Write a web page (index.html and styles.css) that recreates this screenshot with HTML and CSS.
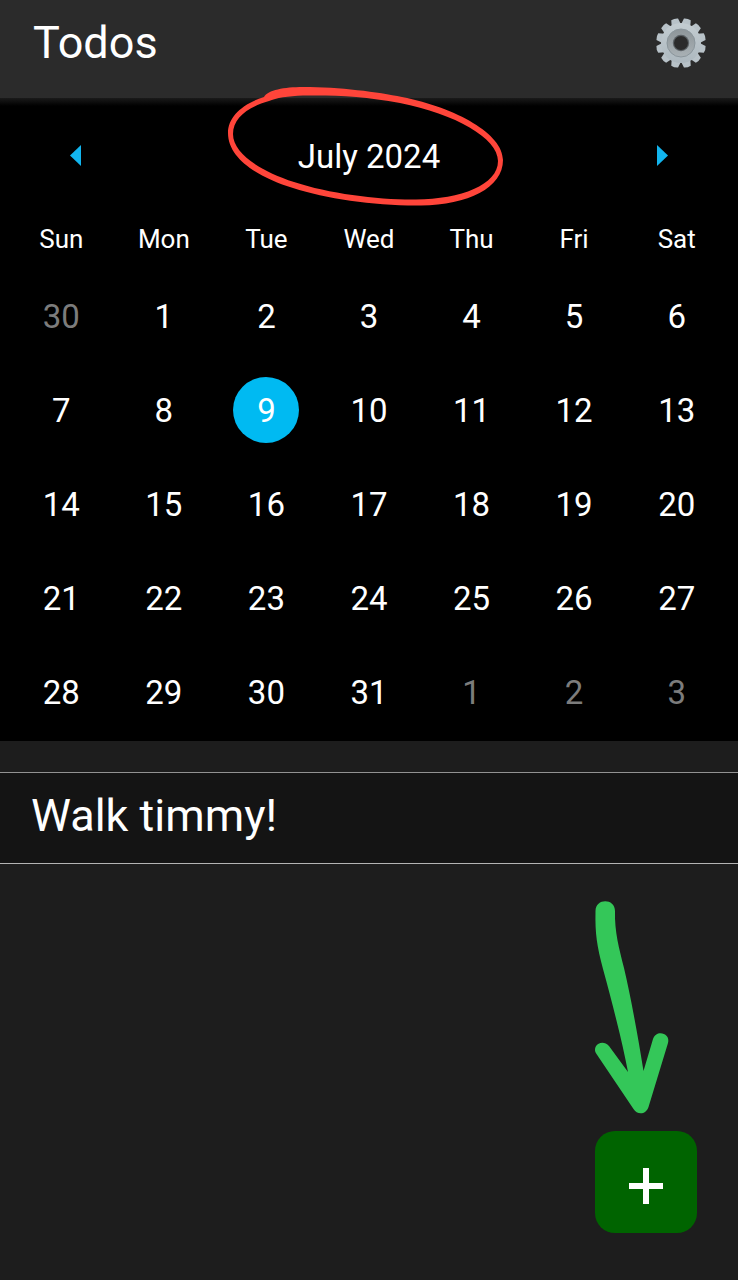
FILE: index.html
```html
<!DOCTYPE html>
<html lang="en">
<head>
<meta charset="utf-8">
<meta name="viewport" content="width=device-width, initial-scale=1">
<title>Todos</title>
<link rel="stylesheet" href="styles.css">
</head>
<body>
<header class="app-bar">
  <h1 class="app-title">Todos</h1>
  <button class="settings" type="button" aria-label="Settings">
    <svg class="gear" viewBox="-26 -26 52 52" aria-hidden="true">
      <defs>
        <linearGradient id="metal" x1="0" y1="0" x2="0" y2="1">
          <stop offset="0" stop-color="#c3ccd1"/>
          <stop offset="1" stop-color="#adb8bf"/>
        </linearGradient>
        <linearGradient id="ring" x1="0" y1="0" x2="0" y2="1">
          <stop offset="0" stop-color="#8d9599"/>
          <stop offset="1" stop-color="#a9b1b5"/>
        </linearGradient>
        <path id="tooth" d="M-4.800-18 L-3.500-24.500 Q0-25.700 3.500-24.500 L4.800-18Z"/>
      </defs>
      <g fill="#b8c2c8">
        <use href="#tooth" transform="rotate(15)"/><use href="#tooth" transform="rotate(45)"/>
        <use href="#tooth" transform="rotate(75)"/><use href="#tooth" transform="rotate(105)"/>
        <use href="#tooth" transform="rotate(135)"/><use href="#tooth" transform="rotate(165)"/>
        <use href="#tooth" transform="rotate(195)"/><use href="#tooth" transform="rotate(225)"/>
        <use href="#tooth" transform="rotate(255)"/><use href="#tooth" transform="rotate(285)"/>
        <use href="#tooth" transform="rotate(315)"/><use href="#tooth" transform="rotate(345)"/>
      </g>
      <circle r="20" fill="url(#metal)"/>
      <circle r="14" fill="url(#ring)" stroke="#8b969c" stroke-width="1"/>
      <circle r="8.2" fill="#5a6064"/>
      <circle r="7" fill="#2b2b2b"/>
    </svg>
  </button>
</header>

<main>
  <section class="calendar" aria-label="Calendar">
    <div class="month-bar">
      <button class="month-nav" type="button" aria-label="Previous month">
        <svg class="chevron" viewBox="0 0 12 22" aria-hidden="true"><path d="M12 0v21L1 10.500z"/></svg>
      </button>
      <h2 class="month">July 2024</h2>
      <button class="month-nav" type="button" aria-label="Next month">
        <svg class="chevron" viewBox="0 0 12 22" aria-hidden="true"><path d="M0 0v21L11 10.500z"/></svg>
      </button>
      <svg class="highlight" viewBox="226 84 280 124" aria-hidden="true">
        <path fill-rule="evenodd" d="M264 97C268 90 284 87 303 87C340 87 378 92 402 97C457 108 503 134 503 160C503 188 468 205 421 205.500C375 206 327 199 293 188C257 177 228 158 228 133C228 117 242 104 264 97ZM269 101C248 107 233 118 233 134C233 154 261 171 294 182C330 194 380 200 416 199.500C461 199 498 185 498 161C498 138 455 114 400 103C364 96 334 95 303 95.500C288 96 276 98 269 101Z"/>
      </svg>
    </div>
    <table class="days">
      <thead>
        <tr><th scope="col">Sun</th><th scope="col">Mon</th><th scope="col">Tue</th><th scope="col">Wed</th><th scope="col">Thu</th><th scope="col">Fri</th><th scope="col">Sat</th></tr>
      </thead>
      <tbody>
        <tr><td><button class="day other" type="button">30</button></td><td><button class="day" type="button">1</button></td><td><button class="day" type="button">2</button></td><td><button class="day" type="button">3</button></td><td><button class="day" type="button">4</button></td><td><button class="day" type="button">5</button></td><td><button class="day" type="button">6</button></td></tr>
        <tr><td><button class="day" type="button">7</button></td><td><button class="day" type="button">8</button></td><td><button class="day selected" type="button" aria-current="date">9</button></td><td><button class="day" type="button">10</button></td><td><button class="day" type="button">11</button></td><td><button class="day" type="button">12</button></td><td><button class="day" type="button">13</button></td></tr>
        <tr><td><button class="day" type="button">14</button></td><td><button class="day" type="button">15</button></td><td><button class="day" type="button">16</button></td><td><button class="day" type="button">17</button></td><td><button class="day" type="button">18</button></td><td><button class="day" type="button">19</button></td><td><button class="day" type="button">20</button></td></tr>
        <tr><td><button class="day" type="button">21</button></td><td><button class="day" type="button">22</button></td><td><button class="day" type="button">23</button></td><td><button class="day" type="button">24</button></td><td><button class="day" type="button">25</button></td><td><button class="day" type="button">26</button></td><td><button class="day" type="button">27</button></td></tr>
        <tr><td><button class="day" type="button">28</button></td><td><button class="day" type="button">29</button></td><td><button class="day" type="button">30</button></td><td><button class="day" type="button">31</button></td><td><button class="day other" type="button">1</button></td><td><button class="day other" type="button">2</button></td><td><button class="day other" type="button">3</button></td></tr>
      </tbody>
    </table>
  </section>

  <ul class="todos">
    <li class="todo">Walk timmy!</li>
  </ul>
</main>

<div class="add-area">
  <svg class="arrow" viewBox="590 896 84 222" aria-hidden="true">
    <path d="M595.500 911C595.500 898 615 898 615 911C614.500 932 619 948 624 968C631 998 638 1036 643.500 1071L653 1039C656 1029 671 1033 668 1043L648.500 1107C646 1115 637 1115 633.500 1109L596.500 1054C591 1046 602 1038 609 1046L628 1072C622 1040 612 1002 603 969C597 946 595 934 595.500 911Z"/>
  </svg>
  <button class="add" type="button" aria-label="Add todo">
    <svg class="plus" viewBox="0 0 34 36" aria-hidden="true"><path d="M14 0h6v15h14v6H20v15h-6V21H0v-6h14z"/></svg>
  </button>
</div>
</body>
</html>
```
FILE: styles.css
```css
* {
  box-sizing: border-box;
}

body {
  margin: 0;
  min-height: 100vh;
  background: #1d1d1d;
  color: #fff;
  font-family: Roboto, "Noto Sans", sans-serif;
}

button {
  padding: 0;
  border: 0;
  background: none;
  color: inherit;
  font: inherit;
  cursor: pointer;
}

svg {
  display: block;
}

.app-bar {
  display: flex;
  align-items: center;
  justify-content: space-between;
  padding: 14px 31px 26px 33px;
  background: #2b2b2b;
}

.app-title {
  margin: 0;
  font-size: 45px;
  font-weight: 400;
  line-height: 58px;
}

.gear {
  width: 52px;
  height: 52px;
}

.calendar {
  padding: 6px 10px 2px;
  background: linear-gradient(#1a1a1a, #000 8px);
}

.month-bar {
  position: relative;
  display: flex;
  align-items: center;
  justify-content: space-between;
  height: 104px;
  padding: 0 54px;
}

.month {
  margin: 0;
  font-size: 33px;
  font-weight: 400;
}

.month-nav {
  padding: 5px;
}

.chevron {
  width: 12px;
  height: 22px;
  fill: #12b5ee;
}

.highlight {
  position: absolute;
  top: -20px;
  left: 50%;
  width: 280px;
  height: 124px;
  margin-left: -143px;
  fill: #ff453a;
  pointer-events: none;
}

.days {
  width: 100%;
  table-layout: fixed;
  border-collapse: collapse;
  text-align: center;
}

.days th {
  height: 61px;
  padding: 0;
  font-size: 26px;
  font-weight: 400;
}

.days td {
  padding: 14px 0;
}

.day {
  display: block;
  width: 66px;
  height: 66px;
  margin: 0 auto;
  border-radius: 50%;
  font-size: 33px;
}

.other {
  color: #7c7c7c;
}

.selected {
  background: #00baf2;
}

.todos {
  margin: 31px 0 0;
  padding: 0;
  list-style: none;
  border-top: 1px solid #929292;
}

.todo {
  padding: 14px 31px 18px;
  border-bottom: 1px solid #b4b4b4;
  background: #141414;
  font-size: 45px;
  line-height: 58px;
}

.add-area {
  position: fixed;
  right: 41px;
  bottom: 47px;
  display: flex;
  flex-direction: column;
  gap: 13px;
}

.arrow {
  width: 84px;
  height: 222px;
  margin-left: -5px;
  fill: #34c759;
  pointer-events: none;
}

.add {
  display: grid;
  place-items: center;
  width: 102px;
  height: 102px;
  border-radius: 20px;
  background: #006400;
}

.plus {
  width: 34px;
  height: 36px;
  margin-top: 8px;
  fill: #fff;
}
```
